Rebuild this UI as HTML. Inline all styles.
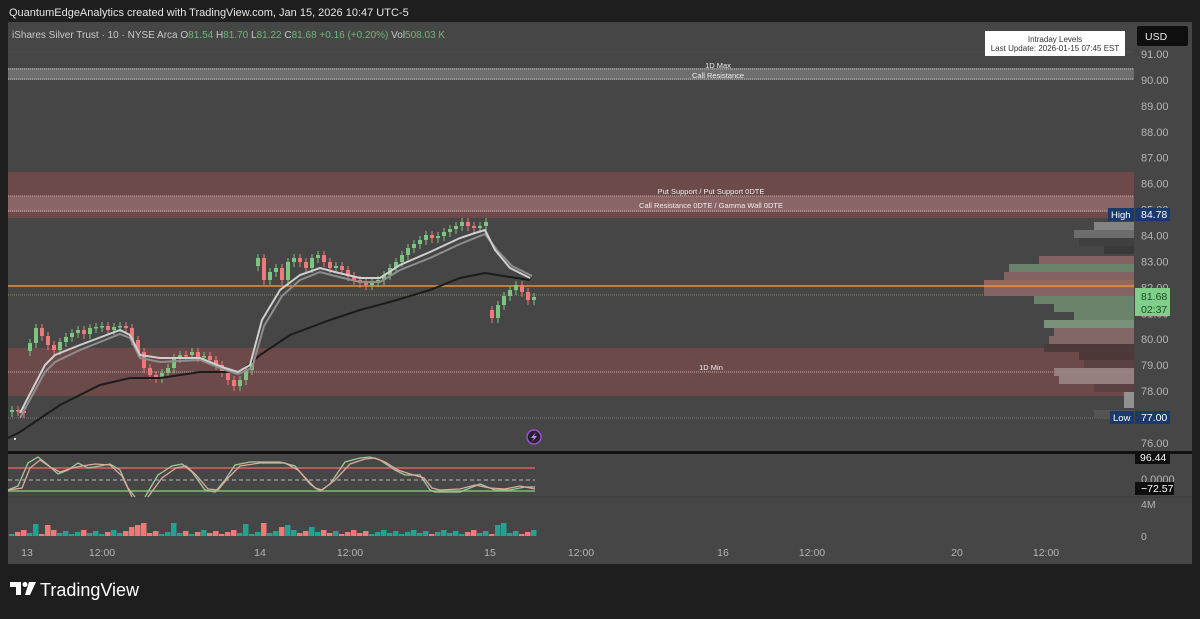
<!DOCTYPE html>
<html><head><meta charset="utf-8"><style>
body{margin:0;width:1200px;height:614px;background:#1e1e1e;overflow:hidden;font-family:"Liberation Sans",sans-serif;}
svg text{font-family:"Liberation Sans",sans-serif;}
</style></head><body>
<svg id="s" width="1200" height="614" xmlns="http://www.w3.org/2000/svg">
<text x="9" y="16" fill="#e6e6e6" font-size="11">QuantumEdgeAnalytics created with TradingView.com, Jan 15, 2026 10:47 UTC-5</text>
<rect x="8" y="22" width="1184" height="542" fill="#464646"/>
<line x1="8" y1="52" x2="1134" y2="52" stroke="#505050"/>
<rect x="8" y="68" width="1126" height="12" fill="#6e6e6e"/>
<line x1="8" y1="69" x2="1134" y2="69" stroke="#bbb" stroke-dasharray="1,1"/>
<line x1="8" y1="79" x2="1134" y2="79" stroke="#bbb" stroke-dasharray="1,1"/>
<text x="718" y="68" fill="#eee" font-size="7.5" text-anchor="middle">1D Max</text>
<text x="718" y="78" fill="#eee" font-size="7.5" text-anchor="middle">Call Resistance</text>
<rect x="8" y="172" width="1126" height="46" fill="#6c4a4a"/>
<rect x="8" y="196" width="1126" height="16" fill="#8a6565"/>
<line x1="8" y1="196" x2="1134" y2="196" stroke="#c9aaaa" stroke-dasharray="1,1"/>
<line x1="8" y1="211" x2="1134" y2="211" stroke="#c9aaaa" stroke-dasharray="1,1"/>
<text x="711" y="194" fill="#eee" font-size="7.5" text-anchor="middle">Put Support / Put Support 0DTE</text>
<text x="711" y="208" fill="#eee" font-size="7.5" text-anchor="middle">Call Resistance 0DTE / Gamma Wall 0DTE</text>
<rect x="8" y="348" width="1126" height="48" fill="#6c4a4a"/>
<line x1="8" y1="372" x2="1134" y2="372" stroke="#c9aaaa" stroke-dasharray="1,1"/>
<text x="711" y="370" fill="#eee" font-size="7.5" text-anchor="middle">1D Min</text>
<line x1="8" y1="418" x2="1134" y2="418" stroke="#777" stroke-dasharray="1,1"/>
<line x1="8" y1="295" x2="1134" y2="295" stroke="#8a8a55" stroke-dasharray="1,1"/>
<g id="prof"></g>
<line x1="8" y1="286" x2="1134" y2="286" stroke="#e8903a" stroke-width="1.5"/>
<g id="cand"></g>
<polyline fill="none" stroke="#1c1c1c" stroke-width="2" points="8,438 20,432 60,405 100,385 130,378 160,378 200,372 240,372 260,355 290,335 330,320 360,310 390,302 430,290 460,278 485,273 510,277 530,280"/>
<polyline fill="none" stroke="#8e8e8e" stroke-width="2" points="20,418 45,372 55,362 80,350 120,334 130,338 140,358 160,362 200,360 225,370 238,374 252,368 264,326 282,296 300,280 320,272 335,276 360,282 380,282 400,270 430,258 460,244 475,238 485,234 497,250 512,266 532,276"/>
<polyline fill="none" stroke="#cfcfcf" stroke-width="2" points="20,413 45,365 55,355 80,345 120,330 130,335 140,355 160,358 200,358 225,368 238,372 250,365 262,320 280,290 300,275 320,268 335,272 360,278 380,278 400,265 430,252 460,238 475,233 485,230 495,250 510,268 530,278"/>
<circle cx="534" cy="437" r="7" fill="#2a1e33" stroke="#9b4fd1" stroke-width="1.5"/>
<path d="M536 432 L531 438 L534 438 L532 442 L537 436 L534 436 Z" fill="#c48ef0"/>
<rect x="14" y="438" width="2" height="2" fill="#ddd"/>
<rect x="8" y="451" width="1184" height="3" fill="#111"/>
<line x1="8" y1="497" x2="1192" y2="497" stroke="#3a3a3a"/>
<line x1="8" y1="468" x2="535" y2="468" stroke="#d9625f" stroke-width="1.5"/>
<line x1="8" y1="480" x2="535" y2="480" stroke="#bbb" stroke-dasharray="4,3"/>
<line x1="8" y1="491" x2="535" y2="491" stroke="#7bbf6a" stroke-width="1.5"/>
<polyline fill="none" stroke="#9ec99a" stroke-width="1.3" points="8,490 18,486 28,463 38,457 48,465 58,474 68,470 78,463 88,468 100,466 110,464 120,470 128,488 135,497"/>
<polyline fill="none" stroke="#e0a8a0" stroke-width="1.3" points="8,490 22,488 30,468 40,460 50,467 60,472 72,468 82,466 95,464 110,465 122,476 132,497"/>
<polyline fill="none" stroke="#9ec99a" stroke-width="1.3" points="145,497 158,475 172,466 182,464 192,472 205,490 215,492 225,480 235,465 250,462 280,462 295,466 310,484 320,491 330,484 345,462 360,458 370,457 380,460 395,470 405,475 420,475 430,490 435,492 460,492 470,488 480,484 495,490 510,490 525,487 535,487"/>
<polyline fill="none" stroke="#e0a8a0" stroke-width="1.3" points="148,497 162,478 176,468 186,466 196,475 208,489 218,490 228,478 240,466 260,463 285,463 298,470 315,488 322,490 335,480 350,464 365,459 375,458 385,462 398,470 410,474 424,478 432,488 440,490 460,489 475,485 490,488 505,489 520,486 535,489"/>
<g id="vol"></g>
<g fill="#b5b5b5" font-size="11" id="pax"></g>
<rect x="1137" y="26" width="51" height="20" rx="2" fill="#0f0f0f"/>
<text x="1145" y="40" fill="#eee" font-size="10.5">USD</text>
<rect x="985" y="31" width="140" height="25" fill="#fff"/>
<text x="1055" y="42" fill="#333" font-size="8" text-anchor="middle">Intraday Levels</text>
<text x="1055" y="51" fill="#333" font-size="8" text-anchor="middle">Last Update: 2026-01-15 07:45 EST</text>
<rect x="1108" y="208" width="26" height="13" fill="#1b3a6b"/>
<text x="1111" y="218" fill="#fff" font-size="9.5">High</text>
<rect x="1135" y="208" width="35" height="13" fill="#1b3a6b"/>
<text x="1141" y="218" fill="#fff" font-size="10.5">84.78</text>
<rect x="1110" y="411" width="24" height="13" fill="#1b3a6b"/>
<text x="1113" y="421" fill="#fff" font-size="9.5">Low</text>
<rect x="1135" y="411" width="35" height="13" fill="#1b3a6b"/>
<text x="1141" y="421" fill="#fff" font-size="10.5">77.00</text>
<rect x="1135" y="288" width="35" height="28" fill="#7fcf8a"/>
<text x="1141" y="300" fill="#1f4a25" font-size="10.5">81.68</text>
<text x="1141" y="313" fill="#1f4a25" font-size="10.5">02:37</text>
<text x="1141" y="483" fill="#b5b5b5" font-size="11">0.0000</text>
<rect x="1135" y="451" width="35" height="13" fill="#0f0f0f"/>
<text x="1140" y="461" fill="#fff" font-size="10.5">96.44</text>
<rect x="1135" y="482" width="39" height="13" fill="#0f0f0f"/>
<text x="1141" y="492" fill="#fff" font-size="10.5">−72.57</text>
<text x="1141" y="508" fill="#b5b5b5" font-size="10.5">4M</text>
<text x="1141" y="540" fill="#b5b5b5" font-size="10.5">0</text>
<g fill="#b5b5b5" font-size="10.5" text-anchor="middle">
<text x="27" y="556">13</text><text x="102" y="556">12:00</text><text x="260" y="556">14</text><text x="350" y="556">12:00</text><text x="490" y="556">15</text><text x="581" y="556">12:00</text><text x="723" y="556">16</text><text x="812" y="556">12:00</text><text x="957" y="556">20</text><text x="1046" y="556">12:00</text>
</g>
<rect x="1192" y="22" width="8" height="542" fill="#1e1e1e"/>
<text x="12" y="38" fill="#c8c8c8" font-size="10">iShares Silver Trust · 10 · NYSE Arca  O<tspan fill="#6fb57a">81.54</tspan>  H<tspan fill="#6fb57a">81.70</tspan>  L<tspan fill="#6fb57a">81.22</tspan>  C<tspan fill="#6fb57a">81.68 +0.16 (+0.20%)</tspan>  Vol<tspan fill="#6fb57a">508.03 K</tspan></text>
<path d="M10 582 h11 v13 h-5 v-8 h-6 z" fill="#fff"/>
<circle cx="25" cy="584.5" r="2.5" fill="#fff"/>
<path d="M29 582 h7 l-6 13 h-5 z" fill="#fff"/>
<text x="40" y="596" fill="#fff" font-size="18">TradingView</text>
</svg>
<script>
(function(){
var NS="http://www.w3.org/2000/svg";
function el(p,t,a){var e=document.createElementNS(NS,t);for(var k in a)e.setAttribute(k,a[k]);document.getElementById(p).appendChild(e);return e;}
var pax=document.getElementById('pax');
for(var p=91;p>=76;p--){var yy=54+(91-p)*25.93;var t=document.createElementNS(NS,'text');t.setAttribute('x',1141);t.setAttribute('y',yy+4);t.textContent=p.toFixed(2);pax.appendChild(t);}
var c=[[12,410],[18,411],[24,413],[30,343],[36,328],[42,336],[48,345],[54,350],[60,342],[66,337],[72,333],[78,330],[84,334],[90,328],[96,327],[102,326],[108,330],[114,327],[120,326],[126,328],[132,340],[138,352],[144,368],[150,375],[156,378],[162,373],[168,368],[174,358],[180,355],[186,355],[192,352],[198,357],[204,356],[210,360],[216,365],[222,372],[228,380],[234,386],[240,380],[246,370],[252,362],[258,258],[264,280],[270,272],[276,268],[282,280],[288,262],[294,258],[300,262],[306,268],[312,258],[318,255],[324,262],[330,268],[336,266],[342,270],[348,276],[354,280],[360,283],[366,285],[372,282],[378,280],[384,275],[390,268],[396,262],[402,255],[408,248],[414,244],[420,240],[426,235],[432,238],[438,236],[444,232],[450,229],[456,226],[462,222],[468,226],[474,228],[480,226],[486,222],[492,318],[498,305],[504,296],[510,290],[516,285],[522,292],[528,300],[534,297]];
var prev=412;
for(var i=0;i<c.length;i++){var x=c[i][0],cl=c[i][1],op=prev;if(Math.abs(op-cl)>30)op=cl+(i%2?8:-8);
var up=cl<op;var col=up?'#7cc47f':'#f07878';var tp=Math.min(op,cl),bt=Math.max(op,cl);
el('cand','line',{x1:x,x2:x,y1:tp-4,y2:bt+5,stroke:col});
el('cand','rect',{x:x-2,y:tp,width:4,height:Math.max(1.5,bt-tp),fill:col});prev=cl;
var h=2+((i*37)%5)+(Math.abs(op-cl)>8?7:0);el('vol','rect',{x:x-3,y:536-h,width:5.5,height:h,fill:up?'#22a38f':'#f07878'});}
var pr=[[222,0.4,'#8a8a8a'],[230,0.6,'#707070'],[238,0.55,'#3e3e3e'],[246,0.3,'#393939'],[256,0.95,'#8a6565'],[264,1.25,'#6f8a6f'],[272,1.3,'#8a6565'],[280,1.5,'#9a6a60'],[288,1.5,'#8a6565'],[296,1,'#6f8a6f'],[304,0.8,'#6f8a6f'],[312,0.6,'#6f8a6f'],[320,0.9,'#7f9a7f'],[328,0.8,'#8a6a6a'],[336,0.85,'#8a6a6a'],[344,0.9,'#4a3838'],[352,0.55,'#4a3535'],[360,0.5,'#5a4040'],[368,0.8,'#9a8585'],[376,0.75,'#9a8585'],[384,0.4,'#5a4040'],[392,0.1,'#999'],[400,0.1,'#999'],[410,0.4,'#555']];
for(var j=0;j<pr.length;j++){var w=pr[j][1]*100;el('prof','rect',{x:1134-w,y:pr[j][0],width:w,height:8,fill:pr[j][2],opacity:0.9});}
})();
</script>
</body></html>
